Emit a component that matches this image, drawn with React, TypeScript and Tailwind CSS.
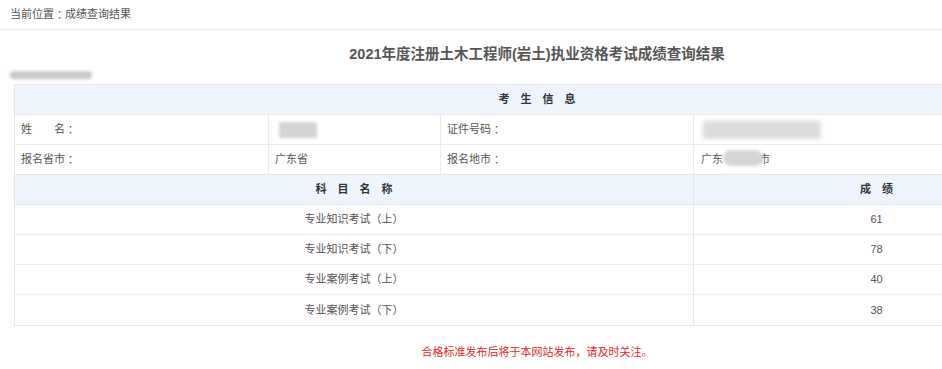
import React from "react";

const font = { fontFamily: '"Liberation Sans", "Noto Sans CJK SC", sans-serif' };

function Colon() {
  return <span style={{ fontFamily: '"Noto Sans CJK TC", sans-serif' }}>：</span>;
}

function Spaced({ chars }: { chars: string[] }) {
  return (
    <div className="flex items-center justify-center gap-[11px] font-bold text-[#333] text-[11px]">
      {chars.map((c, i) => (
        <span key={i}>{c}</span>
      ))}
    </div>
  );
}

const subjects = [
  { name: "专业知识考试（上）", score: "61" },
  { name: "专业知识考试（下）", score: "78" },
  { name: "专业案例考试（上）", score: "40" },
  { name: "专业案例考试（下）", score: "38" },
];

export default function App() {
  return (
    <div className="w-full h-[369px] overflow-hidden bg-white" style={font}>
      <div className="w-[1074px]">
        <div className="h-[30px] border-b border-[#eeeeee] pl-[10px] flex items-center text-[11px] text-[#555]">
          当前位置<Colon />成绩查询结果
        </div>
        <div className="pt-[14px] leading-[20px] text-center text-[14.5px] font-bold text-[#555]">
          2021年度注册土木工程师(岩土)执业资格考试成绩查询结果
        </div>
        <div className="mt-[7px] ml-[10px] w-[82px] h-[8px] rounded-full bg-[#c9c9c9] blur-[1.5px]" />
        <div className="mt-[5px] ml-[14px] w-[1046px] border border-[#e4e9ee] text-[11px] text-[#555]">
          <div className="h-[30px] bg-[#eef5fc] border-b border-[#e4e9ee] flex items-center justify-center">
            <Spaced chars={["考", "生", "信", "息"]} />
          </div>
          <div className="h-[30px] border-b border-[#e9ecef] flex">
            <div className="w-[253px] pl-[6px] flex items-center">姓{"\u3000\u3000"}名<Colon /></div>
            <div className="w-[172px] border-l border-[#e9ecef] pl-[10px] flex items-center">
              <div className="w-[38px] h-[16px] bg-[#d4d4d4] blur-[1.5px]" />
            </div>
            <div className="w-[253px] border-l border-[#e9ecef] pl-[6px] flex items-center">证件号码<Colon /></div>
            <div className="flex-1 border-l border-[#e9ecef] pl-[9px] flex items-center">
              <div className="w-[118px] h-[18px] bg-[#dcdcdc] blur-[2px]" />
            </div>
          </div>
          <div className="h-[30px] border-b border-[#e4e9ee] flex">
            <div className="w-[253px] pl-[6px] flex items-center">报名省市<Colon /></div>
            <div className="w-[172px] border-l border-[#e9ecef] pl-[6px] flex items-center">广东省</div>
            <div className="w-[253px] border-l border-[#e9ecef] pl-[6px] flex items-center">报名地市<Colon /></div>
            <div className="flex-1 border-l border-[#e9ecef] pl-[7px] flex items-center">
              <span>广东</span>
              <span className="relative">
                <span className="inline-block w-[36px]" />
                市
                <span className="absolute left-0 top-[-1px] w-[40px] h-[16px] rounded-full bg-[#d6d6d6] blur-[1.5px]" />
              </span>
            </div>
          </div>
          <div className="h-[30px] bg-[#eef5fc] border-b border-[#e4e9ee] flex">
            <div className="w-[678px] flex items-center justify-center">
              <Spaced chars={["科", "目", "名", "称"]} />
            </div>
            <div className="flex-1 border-l border-[#e4e9ee] flex items-center justify-center">
              <Spaced chars={["成", "绩"]} />
            </div>
          </div>
          {subjects.map((s, i) => (
            <div
              key={i}
              className={`h-[30px] flex ${i < subjects.length - 1 ? "border-b border-[#eceff2]" : ""}`}
            >
              <div className="w-[678px] flex items-center justify-center">{s.name}</div>
              <div className="flex-1 border-l border-[#e4e9ee] flex items-center justify-center">{s.score}</div>
            </div>
          ))}
        </div>
        <div className="mt-[16px] leading-[20px] text-center text-[11px] text-[#e8262b]">
          合格标准发布后将于本网站发布，请及时关注。
        </div>
      </div>
    </div>
  );
}
